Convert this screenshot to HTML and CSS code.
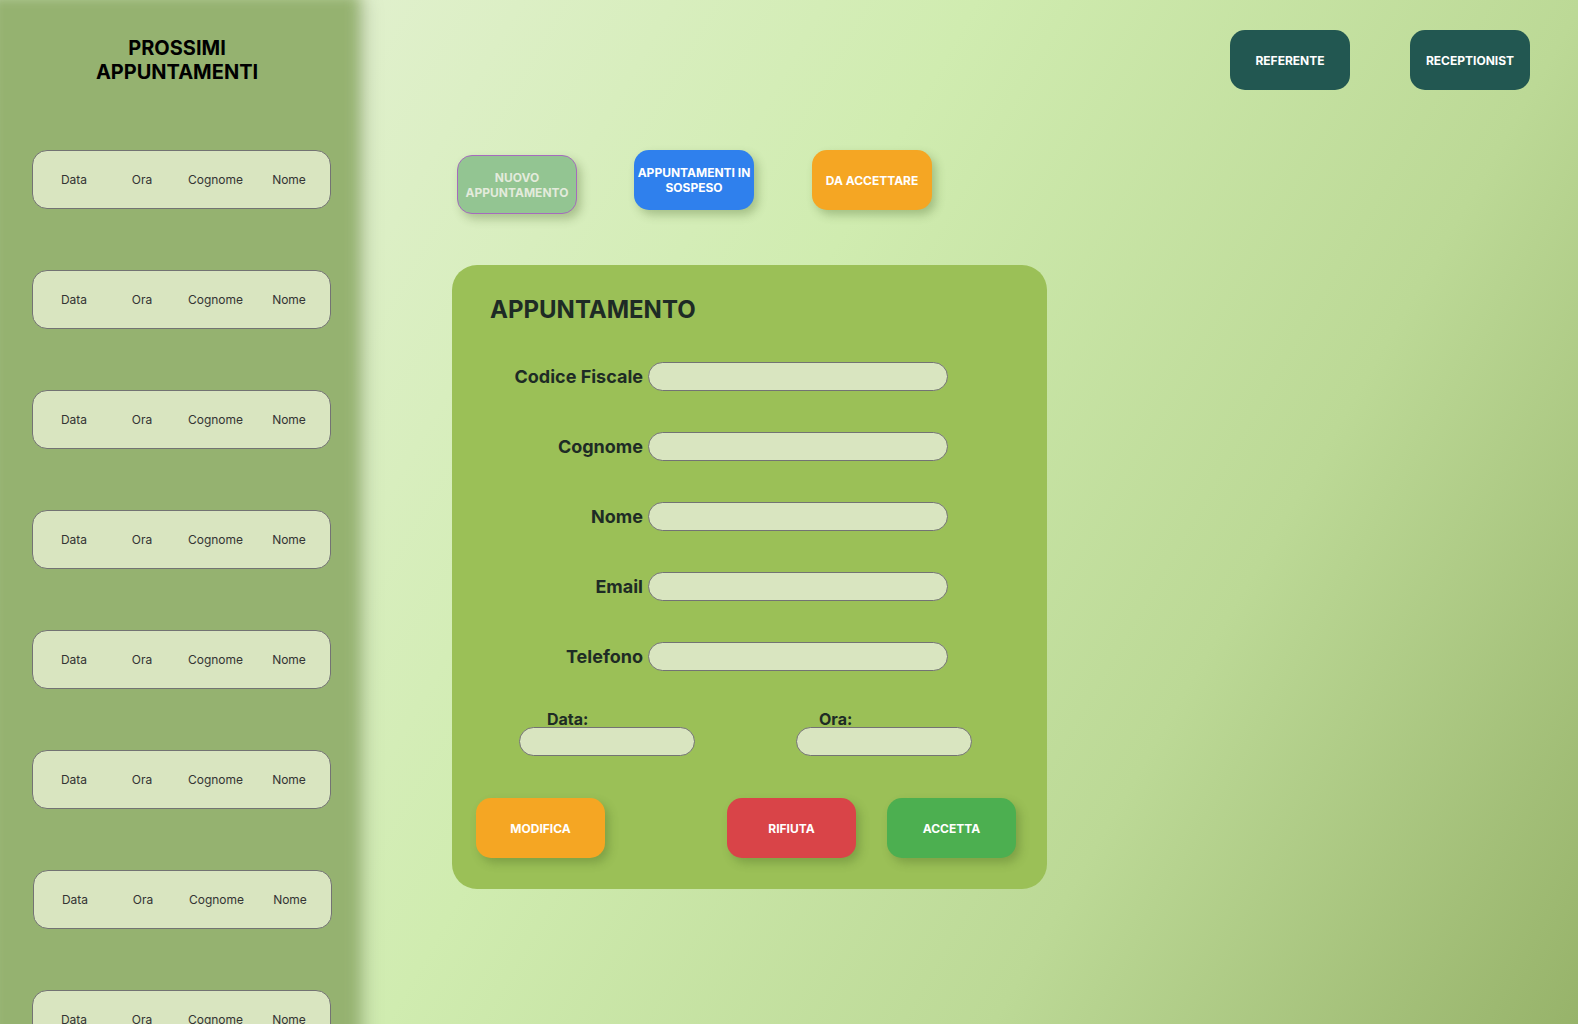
FILE: index.html
```html
<!DOCTYPE html>
<html lang="it">
<head>
<meta charset="utf-8">
<title>Appuntamenti</title>
<link rel="stylesheet" href="styles.css">
</head>
<body>
<div class="page">
  <aside class="sidebar">
    <h2 class="sidebar-title">PROSSIMI<br>APPUNTAMENTI</h2>
    <div class="appt-list">
      <div class="appt-row"><span>Data</span><span>Ora</span><span>Cognome</span><span>Nome</span></div>
      <div class="appt-row"><span>Data</span><span>Ora</span><span>Cognome</span><span>Nome</span></div>
      <div class="appt-row"><span>Data</span><span>Ora</span><span>Cognome</span><span>Nome</span></div>
      <div class="appt-row"><span>Data</span><span>Ora</span><span>Cognome</span><span>Nome</span></div>
      <div class="appt-row"><span>Data</span><span>Ora</span><span>Cognome</span><span>Nome</span></div>
      <div class="appt-row"><span>Data</span><span>Ora</span><span>Cognome</span><span>Nome</span></div>
      <div class="appt-row appt-row-shift"><span>Data</span><span>Ora</span><span>Cognome</span><span>Nome</span></div>
      <div class="appt-row"><span>Data</span><span>Ora</span><span>Cognome</span><span>Nome</span></div>
    </div>
  </aside>

  <main class="main">
    <header class="header">
      <button class="role-btn">REFERENTE</button>
      <button class="role-btn">RECEPTIONIST</button>
    </header>

    <nav class="tabs">
      <button class="tab tab-new">NUOVO<br>APPUNTAMENTO</button>
      <button class="tab tab-pending">APPUNTAMENTI IN<br>SOSPESO</button>
      <button class="tab tab-accept">DA ACCETTARE</button>
    </nav>

    <section class="form-card">
      <h1 class="form-title">APPUNTAMENTO</h1>
      <div class="fields">
        <label class="field-label">Codice Fiscale</label><input class="field-input" type="text">
        <label class="field-label">Cognome</label><input class="field-input" type="text">
        <label class="field-label">Nome</label><input class="field-input" type="text">
        <label class="field-label">Email</label><input class="field-input" type="text">
        <label class="field-label">Telefono</label><input class="field-input" type="text">
      </div>
      <div class="datetime">
        <div class="dt-group">
          <label class="dt-label dt-label-data">Data:</label>
          <input class="dt-input" type="text">
        </div>
        <div class="dt-group">
          <label class="dt-label dt-label-ora">Ora:</label>
          <input class="dt-input" type="text">
        </div>
      </div>
      <div class="actions">
        <button class="btn btn-modifica">MODIFICA</button>
        <button class="btn btn-rifiuta">RIFIUTA</button>
        <button class="btn btn-accetta">ACCETTA</button>
      </div>
    </section>
  </main>
</div>
</body>
</html>
```

FILE: styles.css
```css
html, body {
  margin: 0;
  padding: 0;
}

body {
  width: 1578px;
  height: 1024px;
  overflow: hidden;
  font-family: Inter, "Noto Sans", sans-serif;
  background: linear-gradient(120deg, #e8f5dc 0%, #e0f0cc 17%, #d0ecb0 45%, #bcd996 73%, #97b36a 100%);
}

.page {
  display: flex;
  height: 1024px;
}

button {
  font-family: Inter, "Noto Sans", sans-serif;
  border: none;
  cursor: pointer;
  padding: 0;
}

/* Sidebar */
.sidebar {
  flex-shrink: 0;
  width: 354px;
  height: 1024px;
  margin-left: 1px;
  box-sizing: border-box;
  padding-top: 36px;
  position: relative;
  z-index: 1;
}

.sidebar::before {
  content: "";
  position: absolute;
  top: -6px;
  left: -12px;
  right: -4px;
  bottom: -30px;
  background: #95b270;
  box-shadow: 4px 4px 14px rgba(0, 0, 0, 0.22);
  filter: blur(7px);
  z-index: -1;
}

.sidebar-title {
  margin: 0;
  padding-right: 2px;
  font-size: 20px;
  line-height: 24px;
  font-weight: 700;
  color: #000;
  text-align: center;
}

.appt-list {
  margin-top: 66px;
  padding-left: 31px;
  display: flex;
  flex-direction: column;
  gap: 61px;
}

.appt-row {
  width: 299px;
  height: 59px;
  box-sizing: border-box;
  flex-shrink: 0;
  border: 1px solid #737373;
  border-radius: 15px;
  background: #d9e5c0;
  display: grid;
  grid-template-columns: 64px 72px 75px 72px;
  padding-left: 9px;
  align-items: center;
  justify-items: center;
  font-size: 12px;
  color: #333;
}

.appt-row-shift {
  margin-left: 1px;
}

/* Main */
.main {
  flex: 1;
  display: flex;
  flex-direction: column;
  padding: 30px 48px 0 97px;
}

.header {
  display: flex;
  justify-content: flex-end;
  gap: 60px;
}

.role-btn {
  width: 120px;
  height: 60px;
  border-radius: 15px;
  background: #225751;
  color: #fff;
  font-size: 12px;
  font-weight: 700;
}

.tabs {
  margin-top: 60px;
  margin-left: 4px;
  display: flex;
  gap: 58px;
  align-items: flex-start;
}

.tab {
  width: 120px;
  height: 60px;
  border-radius: 15px;
  color: #fff;
  font-size: 12px;
  line-height: 15px;
  font-weight: 700;
  text-align: center;
  box-shadow: 4px 5px 10px rgba(60, 90, 30, 0.3);
}

.tab-new {
  margin-top: 5px;
  margin-left: 1px;
  margin-right: -1px;
  height: 59px;
  box-sizing: border-box;
  border: 1px solid #a56bbd;
  background: #93c592;
  color: #e3ebdc;
}

.tab-pending {
  background: #2f80ed;
}

.tab-accept {
  background: #f5a623;
}

/* Form card */
.form-card {
  margin-top: 51px;
  width: 595px;
  box-sizing: border-box;
  padding: 30px 31px 31px 24px;
  border-radius: 25px;
  background: #9bc057;
}

.form-title {
  margin: 0 0 38px 14px;
  font-size: 24px;
  line-height: 29px;
  font-weight: 700;
  color: #1e2b25;
}

.fields {
  display: grid;
  grid-template-columns: 167px 300px;
  column-gap: 5px;
  row-gap: 41px;
  align-items: center;
}

.field-label {
  text-align: right;
  font-size: 18px;
  line-height: 22px;
  font-weight: 700;
  color: #1e2b25;
}

.field-input,
.dt-input {
  display: block;
  height: 29px;
  box-sizing: border-box;
  margin: 0;
  border: 1px solid #737373;
  border-radius: 15px;
  background: #d9e5c0;
  outline: none;
  padding: 0 12px;
}

.field-input {
  width: 300px;
}

.datetime {
  margin-top: 40px;
  padding-left: 43px;
  display: flex;
  gap: 101px;
}

.dt-group {
  width: 176px;
}

.dt-input {
  width: 176px;
}

.dt-label {
  display: block;
  font-size: 16px;
  line-height: 16px;
  font-weight: 700;
  color: #1e2b25;
}

.dt-label-data {
  padding-left: 28px;
}

.dt-label-ora {
  padding-left: 23px;
}

.actions {
  margin-top: 42px;
  display: flex;
  gap: 31px;
}

.btn {
  width: 129px;
  height: 60px;
  border-radius: 15px;
  color: #fff;
  font-size: 12px;
  font-weight: 700;
  box-shadow: 4px 5px 10px rgba(60, 90, 30, 0.3);
}

.btn-modifica {
  background: #f5a623;
}

.btn-rifiuta {
  margin-left: auto;
  background: #d94448;
}

.btn-accetta {
  background: #4caf50;
}
```
